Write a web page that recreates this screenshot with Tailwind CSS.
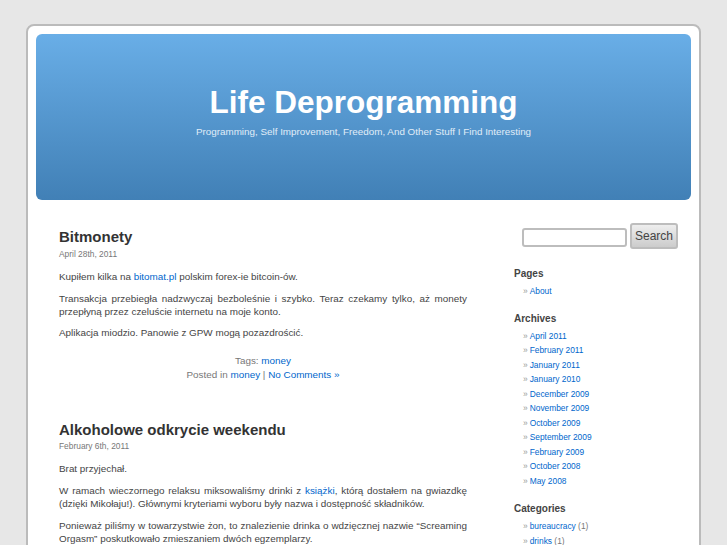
<!DOCTYPE html>
<html lang="pl">
<head>
    <meta charset="UTF-8">
    <meta name="viewport" content="width=device-width, initial-scale=1.0">
    <title>Life Deprogramming</title>
    <script src="https://cdn.jsdelivr.net/npm/@tailwindcss/browser@4"></script>
</head>
<body class="bg-[#e7e7e7] h-[545px] overflow-hidden font-['Liberation_Sans',sans-serif] text-[#444]">
    <div class="ml-[26px] mt-6 w-[675px] h-[700px] bg-white border-2 border-[#bbb] rounded-lg p-2">
        <header class="h-[166px] rounded-md bg-gradient-to-b from-[#69aee7] to-[#4180b6] text-center pt-[48px]">
            <h1 class="text-[31.5px] leading-[40px] font-bold text-white">Life Deprogramming</h1>
            <p class="text-[9.85px] leading-[14px] mt-[3px] text-[#e0edf8]">Programming, Self Improvement, Freedom, And Other Stuff I Find Interesting</p>
        </header>
        <div class="flex">
            <main class="w-[456px] pl-[23px] pr-[25px] pt-[28px] shrink-0">
                <article class="h-[193px]">
                    <h2 class="text-[15px] leading-[18px] font-bold text-[#333]">Bitmonety</h2>
                    <p class="text-[8.4px] leading-[11px] mt-[3px] text-[#777]">April 28th, 2011</p>
                    <p class="text-[9.9px] leading-[13px] mt-[10px]">Kupiłem kilka na <a class="text-[#06c]">bitomat.pl</a> polskim forex-ie bitcoin-ów.</p>
                    <p class="text-[9.9px] leading-[13px] mt-[9px] text-justify">Transakcja przebiegła nadzwyczaj bezboleśnie i szybko. Teraz czekamy tylko, aż monety przepłyną przez czeluście internetu na moje konto.</p>
                    <p class="text-[9.9px] leading-[13px] mt-[8px]">Aplikacja miodzio. Panowie z GPW mogą pozazdrościć.</p>
                    <div class="text-[9.9px] leading-[14px] mt-[15px] text-center text-[#777]">
                        <p>Tags: <a class="text-[#06c]">money</a></p>
                        <p>Posted in <a class="text-[#06c]">money</a> | <a class="text-[#06c]">No Comments »</a></p>
                    </div>
                </article>
                <article>
                    <h2 class="text-[15px] leading-[18px] font-bold text-[#333]">Alkoholowe odkrycie weekendu</h2>
                    <p class="text-[8.4px] leading-[11px] mt-[2px] text-[#777]">February 6th, 2011</p>
                    <p class="text-[9.9px] leading-[13px] mt-[10px]">Brat przyjechał.</p>
                    <p class="text-[9.9px] leading-[13px] mt-[9px] text-justify">W ramach wieczornego relaksu miksowaliśmy drinki z <a class="text-[#06c]">książki</a>, którą dostałem na gwiazdkę (dzięki Mikołaju!). Głównymi kryteriami wyboru były nazwa i dostępność składników.</p>
                    <p class="text-[9.9px] leading-[13px] mt-[9px] text-justify">Ponieważ piliśmy w towarzystwie żon, to znalezienie drinka o wdzięcznej nazwie “Screaming Orgasm” poskutkowało zmieszaniem dwóch egzemplarzy.</p>
                </article>
            </main>
            <aside class="flex-1 pt-[23px] pl-[22px]">
                <form class="flex items-start gap-[3px] ml-[8px]">
                    <input type="text" class="w-[105px] h-[19px] mt-[5px] bg-white border-2 border-[#bdbdbd] rounded-[3px]">
                    <button type="button" class="w-[48px] h-[26px] bg-gradient-to-b from-[#eee] to-[#ccc] border-2 border-[#bdbdbd] rounded-[3px] text-[12px] text-[#444]">Search</button>
                </form>
                <h3 class="text-[10px] leading-[12px] font-bold mt-[19px]">Pages</h3>
                <ul class="mt-[4px] text-[8.4px] leading-[14.5px] text-[#06c]">
                    <li class="before:content-['»'] before:text-[#999] before:mr-[2px] pl-[9px]">About</li>
                </ul>
                <h3 class="text-[10px] leading-[12px] font-bold mt-[14px]">Archives</h3>
                <ul class="mt-[4px] text-[8.4px] leading-[14.5px] text-[#06c]">
                    <li class="before:content-['»'] before:text-[#999] before:mr-[2px] pl-[9px]">April 2011</li>
                    <li class="before:content-['»'] before:text-[#999] before:mr-[2px] pl-[9px]">February 2011</li>
                    <li class="before:content-['»'] before:text-[#999] before:mr-[2px] pl-[9px]">January 2011</li>
                    <li class="before:content-['»'] before:text-[#999] before:mr-[2px] pl-[9px]">January 2010</li>
                    <li class="before:content-['»'] before:text-[#999] before:mr-[2px] pl-[9px]">December 2009</li>
                    <li class="before:content-['»'] before:text-[#999] before:mr-[2px] pl-[9px]">November 2009</li>
                    <li class="before:content-['»'] before:text-[#999] before:mr-[2px] pl-[9px]">October 2009</li>
                    <li class="before:content-['»'] before:text-[#999] before:mr-[2px] pl-[9px]">September 2009</li>
                    <li class="before:content-['»'] before:text-[#999] before:mr-[2px] pl-[9px]">February 2009</li>
                    <li class="before:content-['»'] before:text-[#999] before:mr-[2px] pl-[9px]">October 2008</li>
                    <li class="before:content-['»'] before:text-[#999] before:mr-[2px] pl-[9px]">May 2008</li>
                </ul>
                <h3 class="text-[10px] leading-[12px] font-bold mt-[15px]">Categories</h3>
                <ul class="mt-[4px] text-[8.4px] leading-[14.5px] text-[#06c]">
                    <li class="before:content-['»'] before:text-[#999] before:mr-[2px] pl-[9px]">bureaucracy <span class="text-[#777]">(1)</span></li>
                    <li class="before:content-['»'] before:text-[#999] before:mr-[2px] pl-[9px]">drinks <span class="text-[#777]">(1)</span></li>
                </ul>
            </aside>
        </div>
    </div>
</body>
</html>
